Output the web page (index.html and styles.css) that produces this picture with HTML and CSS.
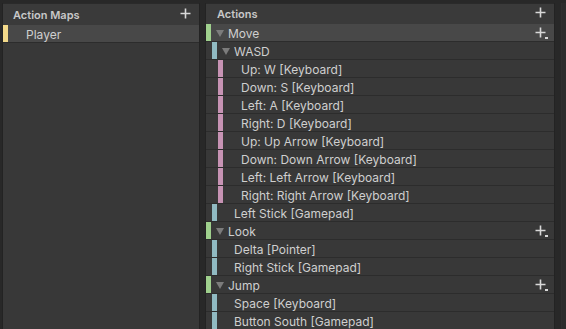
FILE: index.html
```html
<!DOCTYPE html>
<html lang="en">
  <head>
    <meta charset="UTF-8" />
    <title>Input Actions</title>
    <link rel="stylesheet" href="styles.css">
  </head>
  <body>
    <div class="editor">
      <!-- Action maps column -->
      <div class="panel maps-panel">
        <div class="panel-header">
          <span class="panel-title">Action Maps</span>
          <span class="add-btn">
            <svg width="11" height="11" viewBox="0 0 11 11"><path d="M5.5 0.5v10M0.5 5.5h10" stroke="#d8d8d8" stroke-width="1.6"/></svg>
          </span>
        </div>
        <div class="row selected">
          <span class="bar bar-map"></span>
          <span class="label map-label">Player</span>
        </div>
      </div>

      <!-- Actions column -->
      <div class="panel actions-panel">
        <div class="panel-header">
          <span class="panel-title">Actions</span>
          <span class="add-btn">
            <svg width="11" height="11" viewBox="0 0 11 11"><path d="M5.5 0.5v10M0.5 5.5h10" stroke="#d8d8d8" stroke-width="1.6"/></svg>
          </span>
        </div>

        <div class="row action selected">
          <span class="bar bar-action"></span>
          <span class="arrow"><svg width="8" height="7" viewBox="0 0 8 7"><polygon points="0,0 8,0 4,7" fill="#7c7c7c"/></svg></span>
          <span class="label">Move</span>
          <span class="add-binding">
            <svg width="14" height="13" viewBox="0 0 14 13"><path d="M5.5 0.5v10M0.5 5.5h10" stroke="#d8d8d8" stroke-width="1.6"/><rect x="10" y="10" width="3" height="2" fill="#d8d8d8"/></svg>
          </span>
        </div>
        <div class="row composite">
          <span class="bar bar-binding"></span>
          <span class="arrow"><svg width="8" height="7" viewBox="0 0 8 7"><polygon points="0,0 8,0 4,7" fill="#7c7c7c"/></svg></span>
          <span class="label">WASD</span>
        </div>
        <div class="row part"><span class="bar bar-part"></span><span class="label">Up: W [Keyboard]</span></div>
        <div class="row part"><span class="bar bar-part"></span><span class="label">Down: S [Keyboard]</span></div>
        <div class="row part"><span class="bar bar-part"></span><span class="label">Left: A [Keyboard]</span></div>
        <div class="row part"><span class="bar bar-part"></span><span class="label">Right: D [Keyboard]</span></div>
        <div class="row part"><span class="bar bar-part"></span><span class="label">Up: Up Arrow [Keyboard]</span></div>
        <div class="row part"><span class="bar bar-part"></span><span class="label">Down: Down Arrow [Keyboard]</span></div>
        <div class="row part"><span class="bar bar-part"></span><span class="label">Left: Left Arrow [Keyboard]</span></div>
        <div class="row part"><span class="bar bar-part"></span><span class="label">Right: Right Arrow [Keyboard]</span></div>
        <div class="row binding"><span class="bar bar-binding"></span><span class="label">Left Stick [Gamepad]</span></div>

        <div class="row action">
          <span class="bar bar-action"></span>
          <span class="arrow"><svg width="8" height="7" viewBox="0 0 8 7"><polygon points="0,0 8,0 4,7" fill="#7c7c7c"/></svg></span>
          <span class="label">Look</span>
          <span class="add-binding">
            <svg width="14" height="13" viewBox="0 0 14 13"><path d="M5.5 0.5v10M0.5 5.5h10" stroke="#d8d8d8" stroke-width="1.6"/><rect x="10" y="10" width="3" height="2" fill="#d8d8d8"/></svg>
          </span>
        </div>
        <div class="row binding"><span class="bar bar-binding"></span><span class="label">Delta [Pointer]</span></div>
        <div class="row binding"><span class="bar bar-binding"></span><span class="label">Right Stick [Gamepad]</span></div>

        <div class="row action">
          <span class="bar bar-action"></span>
          <span class="arrow"><svg width="8" height="7" viewBox="0 0 8 7"><polygon points="0,0 8,0 4,7" fill="#7c7c7c"/></svg></span>
          <span class="label">Jump</span>
          <span class="add-binding">
            <svg width="14" height="13" viewBox="0 0 14 13"><path d="M5.5 0.5v10M0.5 5.5h10" stroke="#d8d8d8" stroke-width="1.6"/><rect x="10" y="10" width="3" height="2" fill="#d8d8d8"/></svg>
          </span>
        </div>
        <div class="row binding"><span class="bar bar-binding"></span><span class="label">Space [Keyboard]</span></div>
        <div class="row binding"><span class="bar bar-binding"></span><span class="label">Button South [Gamepad]</span></div>
      </div>

      <div class="side-strip"></div>
    </div>
  </body>
</html>
```

FILE: styles.css
```css
* {
  margin: 0;
  padding: 0;
  box-sizing: border-box;
}

body {
  font-family: Inter, "Noto Sans", sans-serif;
  font-size: 12px;
  color: #cfcfcf;
  background: #282828;
  width: 566px;
  height: 329px;
  overflow: hidden;
}

.editor {
  display: flex;
  height: 100%;
  padding-top: 3px;
}

.panel {
  background: #383838;
  display: flex;
  flex-direction: column;
}

.maps-panel {
  width: 198px;
  margin-left: 2px;
  border-left: 1px solid #232323;
  border-right: 1px solid #232323;
}

.actions-panel {
  width: 350px;
  margin-left: 5px;
  border-left: 1px solid #232323;
  border-right: 1px solid #232323;
}

.panel-header {
  height: 22px;
  display: flex;
  align-items: center;
  justify-content: space-between;
  padding: 0 8px 3px 10px;
  background: #3a3a3a;
  border-top: 1px solid #2a2a2a;
}

.panel-title {
  font-weight: 600;
  font-size: 11px;
  color: #c8c8c8;
  padding-top: 3px;
}

.actions-panel .panel-title {
  padding-left: 1px;
}

.add-btn {
  display: flex;
  width: 11px;
  height: 11px;
}

.row {
  height: 18px;
  display: flex;
  align-items: stretch;
  border-bottom: 1px solid #2c2c2c;
  position: relative;
}

.row.selected {
  background: #484848;
}

.bar {
  width: 5px;
  flex-shrink: 0;
}

.bar-map {
  background: #f3d98a;
}

.bar-action {
  background: #9fd08d;
}

.bar-binding {
  background: #90bac2;
  margin-left: 6px;
}

.bar-part {
  background: #c793b4;
  margin-left: 12px;
}

.label {
  display: flex;
  align-items: center;
  padding-top: 2px;
  white-space: nowrap;
}

.map-label {
  padding-left: 18px;
}

.arrow {
  display: flex;
  align-items: center;
  padding: 2px 4px 0 5px;
}

.part .label {
  padding-left: 18px;
}

.binding .label {
  padding-left: 17px;
}

.add-binding {
  position: absolute;
  right: 5px;
  top: 3px;
  width: 14px;
  height: 13px;
}

.side-strip {
  flex: 1;
  border-left: 1px solid #2f2f2f;
  margin-left: 6px;
  background: #2c2c2c;
}
```
